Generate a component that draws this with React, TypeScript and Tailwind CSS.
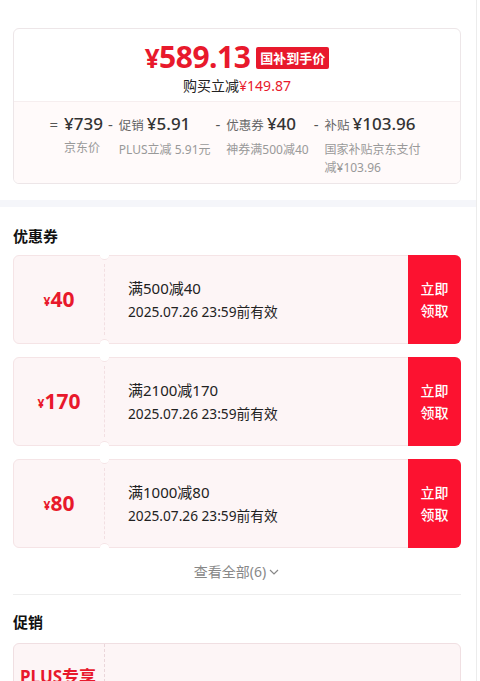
import React from "react";

const font = { fontFamily: '"Noto Sans", "Noto Sans CJK SC", sans-serif' };

function Coupon({ amount, title, date }: { amount: string; title: string; date: string }) {
  return (
    <div className="relative flex h-[89px] rounded-md border border-[#f5e4e6] bg-[#fdf5f6]">
      <div className="flex w-[90px] items-center justify-center text-[#e8192c]">
        <span className="mt-[4px] text-[12px] font-bold">¥</span>
        <span className="text-[21px] font-bold leading-none">{amount}</span>
      </div>
      <div className="my-[8px] border-l border-dashed border-[#f2dfe2]" />
      <div className="flex flex-1 flex-col justify-center pl-[23px]">
        <div className="text-[15px] leading-[22px] text-[#222]">{title}</div>
        <div className="mt-[3px] text-[13.7px] leading-[20px] text-[#222]">{date}</div>
      </div>
      <div className="-my-px -mr-px flex w-[53px] flex-col items-center justify-center rounded-r-md bg-[#fc1230] text-[14px] font-medium leading-[22px] text-white">
        <span>立即</span>
        <span>领取</span>
      </div>
      <div className="absolute -top-[5px] left-[86px] h-[9px] w-[9px] rounded-full border-b border-[#f5e4e6] bg-white" />
      <div className="absolute -bottom-[5px] left-[86px] h-[9px] w-[9px] rounded-full border-t border-[#f5e4e6] bg-white" />
    </div>
  );
}

function Part({ op, label, amount, sub, w }: { op: string; label?: string; amount: string; sub: string; w?: string }) {
  return (
    <div className="flex items-start">
      <span className="mr-[6px] text-[15px] leading-[26px] text-[#555]">{op}</span>
      <div className={w}>
        <div className="flex items-baseline leading-[26px]">
          {label && <span className="mr-[3px] text-[12.5px] text-[#666]">{label}</span>}
          <span className="text-[17px] font-medium text-[#333]">{amount}</span>
        </div>
        <div className="mt-[2px] text-[12px] leading-[18px] text-[#999]">{sub}</div>
      </div>
    </div>
  );
}

export default function App() {
  return (
    <div className="flex min-h-[681px] bg-white" style={font}>
      <div className="w-[477px] shrink-0 border-r border-[#ececec] bg-white">
        <div className="pl-[13px] pr-[15px] pt-[28px] pb-[16px]">
          <div className="overflow-hidden rounded-md border border-[#ede6e8]">
            <div className="flex h-[72px] flex-col items-center pt-[10px]">
              <div className="flex items-center">
                <span className="text-[30px] font-bold leading-[36px] tracking-[-0.5px] text-[#e8192c]">
                  <span className="text-[26px]">¥</span>589.13
                </span>
                <span className="ml-[6px] rounded-[2px] bg-[#e8192c] px-[4px] text-[13px] font-bold leading-[22px] text-white">
                  国补到手价
                </span>
              </div>
              <div className="text-[14px] leading-[20px] text-[#222]">
                购买立减<span className="text-[#e8192c]">¥149.87</span>
              </div>
            </div>
            <div className="flex h-[82px] justify-center gap-[5px] border-t border-[#f6eeef] bg-[#fffafa] pt-[9px]">
              <Part op="=" amount="¥739" sub="京东价" />
              <Part op="-" label="促销" amount="¥5.91" sub="PLUS立减 5.91元" />
              <Part op="-" label="优惠券" amount="¥40" sub="神券满500减40" />
              <Part op="-" label="补贴" amount="¥103.96" sub="国家补贴京东支付减¥103.96" w="w-[100px]" />
            </div>
          </div>
        </div>
        <div className="h-[7px] bg-[#f5f6fa]" />
        <div className="pl-[13px] pr-[15px] pt-[19px]">
          <div className="text-[15px] font-bold leading-[20px] text-[#111]">优惠券</div>
          <div className="mt-[9px] flex flex-col gap-[13px]">
            <Coupon amount="40" title="满500减40" date="2025.07.26 23:59前有效" />
            <Coupon amount="170" title="满2100减170" date="2025.07.26 23:59前有效" />
            <Coupon amount="80" title="满1000减80" date="2025.07.26 23:59前有效" />
          </div>
          <div className="flex h-[46px] items-center justify-center text-[14px] text-[#888]">
            查看全部(6)
            <svg width="12" height="12" viewBox="0 0 12 12" className="ml-[2px] mt-[2px]" fill="none" stroke="#888" strokeWidth="1.2">
              <path d="M2 4l4 4 4-4" />
            </svg>
          </div>
          <div className="border-t border-[#eee]" />
          <div className="pt-[17px] text-[15px] font-bold leading-[20px] text-[#111]">促销</div>
          <div className="mt-[11px] flex h-[60px] rounded-md border border-[#f0dfe2] bg-[#fdf5f6]">
            <div className="flex w-[90px] items-start pl-[6px] pt-[20px] text-[17px] font-bold text-[#e8192c]">PLUS专享</div>
            <div className="border-l border-dashed border-[#ead6da]" />
          </div>
        </div>
      </div>
    </div>
  );
}
